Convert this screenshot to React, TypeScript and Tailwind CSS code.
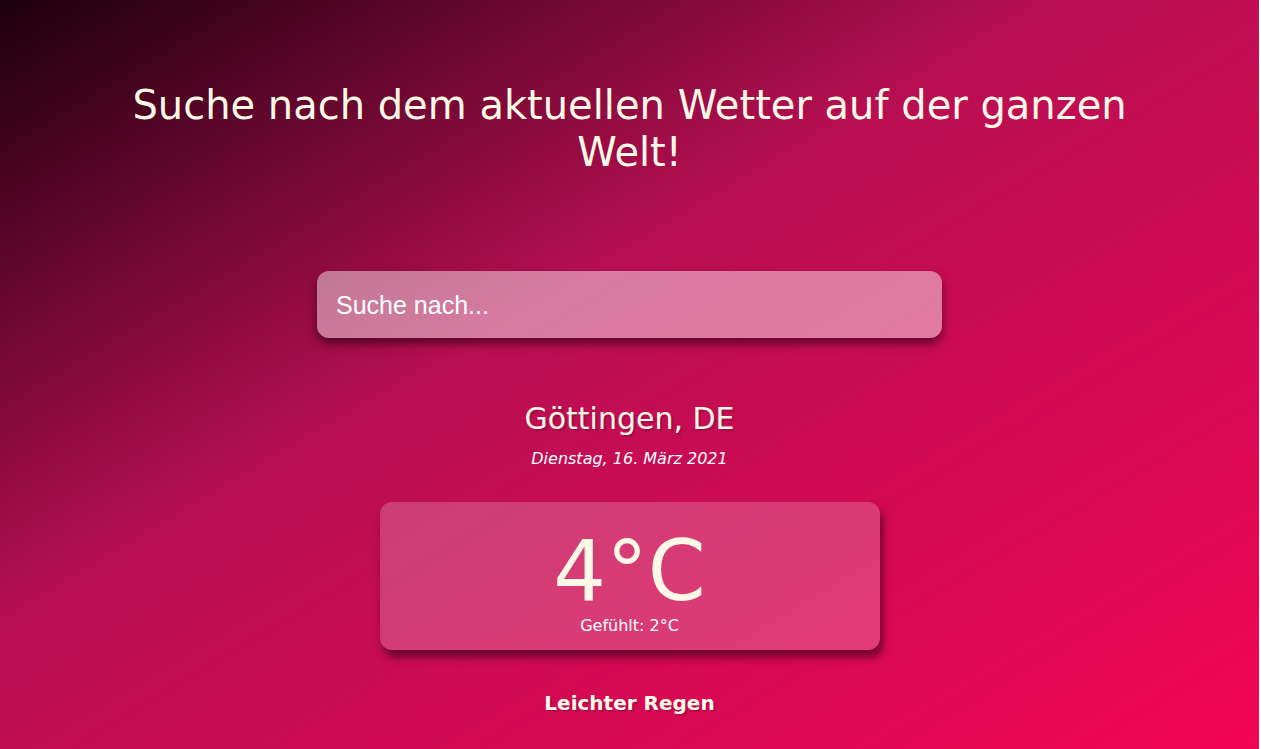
import { useEffect, useRef } from "react";

export default function App() {
  const inputRef = useRef<HTMLInputElement>(null);

  useEffect(() => {
    inputRef.current?.focus();
  }, []);

  return (
    <div className="w-[1259px] min-h-[749px] bg-[linear-gradient(to_bottom_right,#1c000c_0%,#b80f52_42%,#f20554_100%)] font-['DejaVu_Sans',Verdana,sans-serif] text-[#fff8e6]">
      <h1 className="mx-auto max-w-[1000px] pt-[82px] text-center text-[40px] leading-[47px] font-normal">
        Suche nach dem aktuellen Wetter auf der ganzen Welt!
      </h1>

      <div className="mt-[95px] flex justify-center">
        <input
          ref={inputRef}
          type="text"
          placeholder="Suche nach..."
          className="h-[67px] w-[625px] rounded-xl bg-white/45 pl-[19px] pr-[18px] pt-[2px] font-['Liberation_Sans',Arial,sans-serif] text-[25px] text-white caret-black shadow-[0_6px_10px_rgba(40,0,20,0.6)] outline-none placeholder:text-white"
        />
      </div>

      <div className="mt-[63px] text-center">
        <div className="text-[30px] leading-[35px] [text-shadow:2px_2px_rgba(60,20,40,0.25)]">Göttingen, DE</div>
        <div className="mt-[13px] text-[16px] italic leading-[20px] text-white">Dienstag, 16. März 2021</div>
      </div>

      <div className="mx-auto mt-[33px] flex h-[148px] w-[500px] flex-col items-center rounded-xl bg-white/20 shadow-[3px_7px_9px_rgba(40,0,20,0.6)]">
        <div className="mt-[28px] text-[83px] leading-[84px]">4°C</div>
        <div className="mt-[2px] text-[16px] leading-[20px] text-white">Gefühlt: 2°C</div>
      </div>

      <div className="mt-[41px] pb-[10px] text-center text-[20px] font-bold leading-[24px] [text-shadow:2px_2px_rgba(60,20,40,0.25)]">
        Leichter Regen
      </div>
    </div>
  );
}
